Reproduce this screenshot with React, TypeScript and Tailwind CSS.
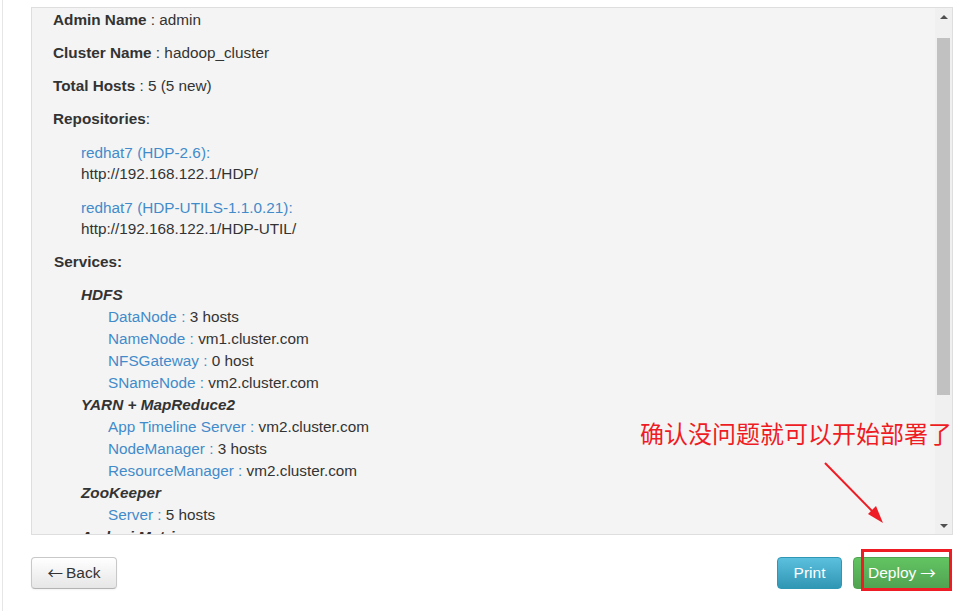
import React from 'react';

const link = 'text-[#428bca]';
const arrowFont = { fontFamily: '"Noto Sans CJK SC", sans-serif' };

function Field({ label, value, bold = true }: { label: string; value?: string; bold?: boolean }) {
  return (
    <p className="m-0 mb-[13px] leading-[20px]">
      <span className={bold ? 'font-bold' : ''}>{label}</span>
      {value !== undefined ? ` : ${value}` : ':'}
    </p>
  );
}

function Repo({ name, url }: { name: string; url: string }) {
  return (
    <div className="pl-[28px] mb-[13px] leading-[21px]">
      <div className={link}>{name}</div>
      <div>{url}</div>
    </div>
  );
}

const services: { name: string; components: [string, string][] }[] = [
  {
    name: 'HDFS',
    components: [
      ['DataNode', '3 hosts'],
      ['NameNode', 'vm1.cluster.com'],
      ['NFSGateway', '0 host'],
      ['SNameNode', 'vm2.cluster.com'],
    ],
  },
  {
    name: 'YARN + MapReduce2',
    components: [
      ['App Timeline Server', 'vm2.cluster.com'],
      ['NodeManager', '3 hosts'],
      ['ResourceManager', 'vm2.cluster.com'],
    ],
  },
  { name: 'ZooKeeper', components: [['Server', '5 hosts']] },
  { name: 'Ambari Metrics', components: [['Metrics Collector', 'vm1.cluster.com']] },
];

function Scrollbar() {
  return (
    <div className="w-[17px] shrink-0 flex flex-col bg-[#f0f0f0]">
      <div className="h-[17px] flex items-center justify-center">
        <div className="w-0 h-0 border-l-[4px] border-r-[4px] border-b-[4px] border-l-transparent border-r-transparent border-b-[#505050]" />
      </div>
      <div className="flex-1 pt-[13px] px-[2px]">
        <div className="h-[357px] bg-[#c1c1c1]" />
      </div>
      <div className="h-[17px] flex items-center justify-center">
        <div className="w-0 h-0 border-l-[4px] border-r-[4px] border-t-[4px] border-l-transparent border-r-transparent border-t-[#505050]" />
      </div>
    </div>
  );
}

export default function App() {
  return (
    <div
      className="relative w-[963px] h-[611px] bg-white overflow-hidden text-[15.3px] text-[#333]"
      style={{ fontFamily: '"Liberation Sans", Arial, sans-serif' }}
    >
      <div className="ml-[2px] h-full border-l border-[#e6e6e6] pl-[28px] pt-[7px]">
        <div className="w-[922px] h-[528px] border border-[#dedede] bg-[#f4f4f4] flex">
          <div className="flex-1 overflow-hidden pl-[21px] pt-[2px]">
            <Field label="Admin Name" value="admin" />
            <Field label="Cluster Name" value="hadoop_cluster" />
            <Field label="Total Hosts" value="5 (5 new)" />
            <Field label="Repositories" />
            <Repo name="redhat7 (HDP-2.6):" url="http://192.168.122.1/HDP/" />
            <Repo name="redhat7 (HDP-UTILS-1.1.0.21):" url="http://192.168.122.1/HDP-UTIL/" />
            <p className="m-0 mb-[12px] pl-[1px] leading-[20px] font-bold">Services:</p>
            <div className="pl-[28px] leading-[22px]">
              {services.map((s) => (
                <div key={s.name}>
                  <div className="font-bold italic">{s.name}</div>
                  {s.components.map(([c, v]) => (
                    <div key={c} className="pl-[27px]">
                      <span className={link}>{c} : </span>
                      {v}
                    </div>
                  ))}
                </div>
              ))}
            </div>
          </div>
          <Scrollbar />
        </div>

        <div className="w-[921px] mt-[22px] flex justify-between text-[15.5px]">
          <button className="w-[86px] h-[32px] rounded-[4px] border border-[#c8c8c8] border-b-[#b3b3b3] bg-linear-to-b from-[#ffffff] to-[#e6e6e6] text-[#333] shadow-[0_1px_2px_rgba(0,0,0,0.05)] flex items-center justify-center gap-[3px]">
            <span style={arrowFont}>←</span>
            <span>Back</span>
          </button>
          <div className="flex gap-[11px]">
            <button className="w-[65px] h-[32px] rounded-[4px] border border-[#2f96b4] bg-linear-to-b from-[#5bc0de] to-[#2f96b4] text-white">
              Print
            </button>
            <button className="w-[99px] h-[32px] rounded-[4px] border border-[#51a351] bg-linear-to-b from-[#62c462] to-[#51a351] text-white pl-[14px] flex items-center gap-[4px]">
              <span>Deploy</span>
              <span style={arrowFont}>→</span>
            </button>
          </div>
        </div>
      </div>

      {/* annotation overlay */}
      <div
        className="absolute left-[640px] top-[415px] text-[24px] leading-[36px] text-[#ee1c24] whitespace-nowrap"
        style={{ fontFamily: '"Noto Sans CJK SC", sans-serif' }}
      >
        确认没问题就可以开始部署了
      </div>
      <svg className="absolute left-0 top-0 pointer-events-none" width="963" height="611">
        <line x1="825" y1="463" x2="876" y2="515" stroke="#ee1c24" strokeWidth="2" />
        <polygon points="883,523 868,514 876,506" fill="#ee1c24" />
      </svg>
      <div className="absolute left-[861px] top-[549px] w-[91px] h-[42px] border-[3px] border-[#ee1c24]" />
    </div>
  );
}
